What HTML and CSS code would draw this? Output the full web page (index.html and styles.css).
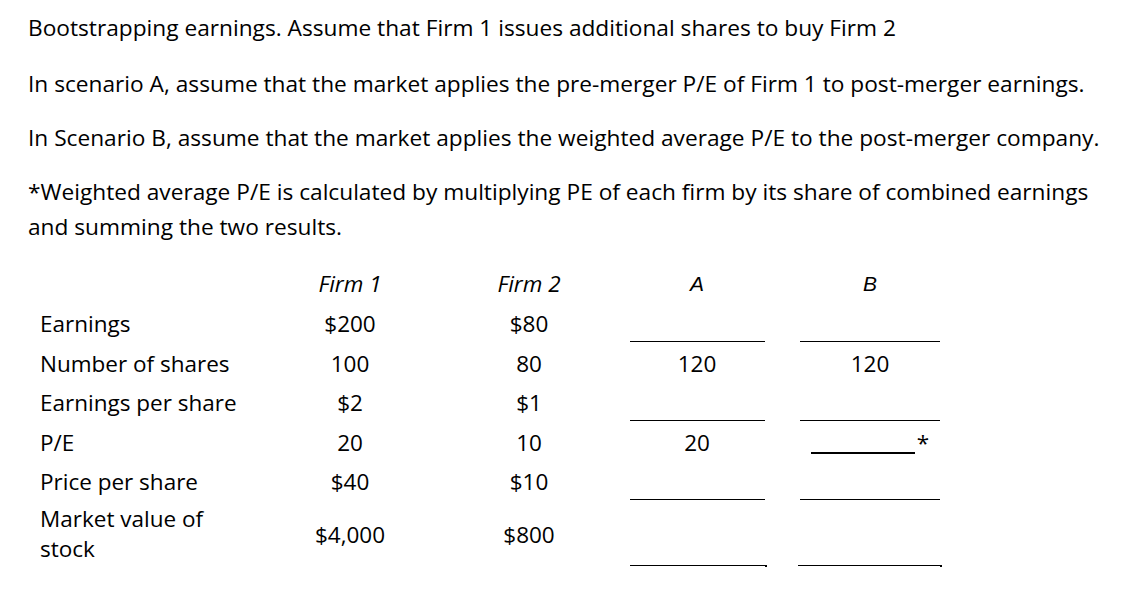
FILE: index.html
```html
<!DOCTYPE html>
<html lang="en">
<head>
<meta charset="utf-8">
<title>Bootstrapping earnings</title>
<link rel="stylesheet" href="styles.css">
</head>
<body>
<div class="page">
  <p class="intro">Bootstrapping earnings. Assume that Firm 1 issues additional shares to buy Firm 2</p>
  <p class="intro">In scenario A, assume that the market applies the pre-merger P/E of Firm 1 to post-merger earnings.</p>
  <p class="intro">In Scenario B, assume that the market applies the weighted average P/E to the post-merger company.</p>
  <p class="intro">*Weighted average P/E is calculated by multiplying PE of each firm by its share of combined earnings and summing the two results.</p>

  <div class="table">
    <div class="label"></div>
    <div class="head">Firm 1</div>
    <div class="head">Firm 2</div>
    <div class="head scen">A</div>
    <div class="head scen">B</div>

    <div class="label">Earnings</div>
    <div class="val">$200</div>
    <div class="val">$80</div>
    <div class="blank"><span class="line a"></span></div>
    <div class="blank"><span class="line b"></span></div>

    <div class="label">Number of shares</div>
    <div class="val">100</div>
    <div class="val">80</div>
    <div class="val">120</div>
    <div class="val">120</div>

    <div class="label">Earnings per share</div>
    <div class="val">$2</div>
    <div class="val">$1</div>
    <div class="blank"><span class="line a"></span></div>
    <div class="blank"><span class="line b"></span></div>

    <div class="label">P/E</div>
    <div class="val">20</div>
    <div class="val">10</div>
    <div class="val">20</div>
    <div class="val star-cell"><span class="short"></span><span class="ast">*</span></div>

    <div class="label">Price per share</div>
    <div class="val">$40</div>
    <div class="val">$10</div>
    <div class="blank"><span class="line a"></span></div>
    <div class="blank"><span class="line b"></span></div>

    <div class="label two">Market value of stock</div>
    <div class="val mid">$4,000</div>
    <div class="val mid">$800</div>
    <div class="blank"><span class="line a end"></span></div>
    <div class="blank"><span class="line b2 end"></span></div>
  </div>
</div>
</body>
</html>
```
FILE: styles.css
```css
html, body {
  margin: 0;
  padding: 0;
  background: #ffffff;
}

body {
  font-family: "Open Sans", "Noto Sans", sans-serif;
  font-size: 22.5px;
  color: #000000;
}

.page {
  padding: 10px 0 0 28px;
}

.intro {
  margin: 0 0 19px 0;
  width: 1085px;
  font-size: 22.7px;
  line-height: 35px;
}

.intro:first-child {
  margin-bottom: 21px;
}

.intro:nth-child(4) {
  margin-bottom: 20px;
}

.table {
  display: grid;
  grid-template-columns: 215px 190px 168px 168px 178px;
  grid-template-rows: 40px repeat(5, 39.6px) 66px;
  margin-left: 12px;
}

.label {
  line-height: 39.6px;
  white-space: nowrap;
}

.label.two {
  white-space: normal;
  line-height: 30px;
  padding-top: 2px;
  width: 180px;
}

.head {
  font-style: italic;
  text-align: center;
  line-height: 40px;
}

.head.scen {
  font-family: "Liberation Sans", Arial, sans-serif;
  font-size: 21px;
}

.val {
  text-align: center;
  line-height: 39.6px;
}

.val.mid {
  align-self: center;
  line-height: 30px;
  padding-top: 1px;
}

.blank {
  display: flex;
  justify-content: center;
  align-items: flex-end;
  padding-bottom: 1.5px;
}

.line {
  display: block;
  height: 1px;
  background: #000000;
  position: relative;
}

.line.a {
  width: 135px;
}

.line.b {
  width: 140px;
}

.line.b2 {
  width: 142px;
  margin-left: -2px;
}

.line.end::after {
  content: "";
  position: absolute;
  right: -2px;
  top: 0;
  width: 2px;
  height: 2px;
  background: #000000;
}

.star-cell {
  display: flex;
  justify-content: center;
  align-items: baseline;
}

.short {
  display: inline-block;
  width: 104px;
  height: 0;
  border-bottom: 2px solid #000000;
  margin-right: 2px;
  vertical-align: baseline;
  transform: translateY(3px);
}

.ast {
  font-size: 22.5px;
  line-height: 39.6px;
}
```
